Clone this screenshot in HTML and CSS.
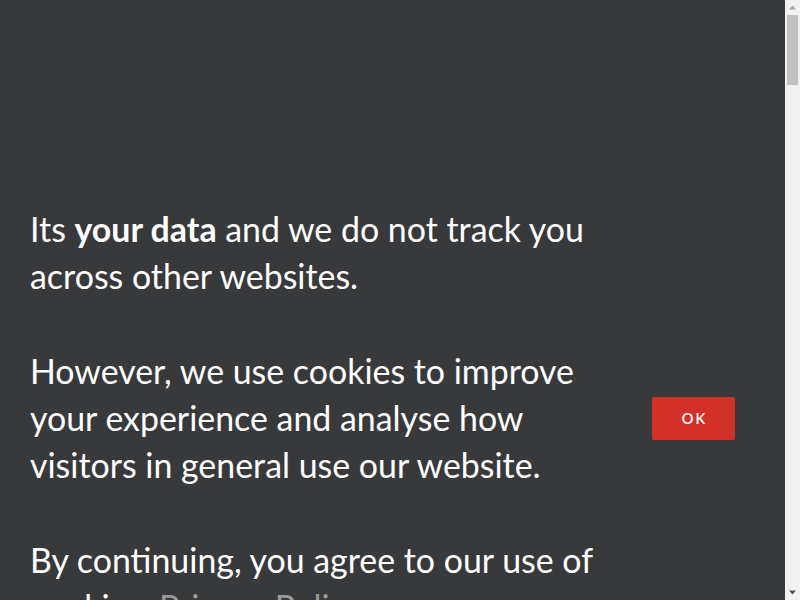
FILE: index.html
```html
<!DOCTYPE html>
<html lang="en">
<head>
<meta charset="utf-8">
<title>Cookies</title>
<link rel="stylesheet" href="styles.css">
</head>
<body>
<div class="page">
  <div class="banner">
    <div class="message">
      <p>Its <strong>your data</strong> and we do not track you across other websites.</p>
      <p>However, we use cookies to improve your experience and analyse how visitors in general use our website.</p>
      <p>By continuing, you agree to our use of cookies. <a class="link" href="#">Privacy Policy</a></p>
    </div>
    <button class="ok" type="button">OK</button>
  </div>
</div>
<div class="scrollbar" aria-hidden="true">
  <svg class="arrow up" width="15" height="15" viewBox="0 0 15 15"><path d="M4 9.5h7L7.5 5.5z" fill="#a3a3a3"/></svg>
  <div class="track"><div class="thumb"></div></div>
  <svg class="arrow down" width="15" height="15" viewBox="0 0 15 15"><path d="M4 5.5h7L7.5 9.5z" fill="#505050"/></svg>
</div>
</body>
</html>
```
FILE: styles.css
```css
html {
  background: #38393b;
}
body {
  margin: 0;
  background: #38393b;
  color: #ffffff;
  font-family: Lato, "Open Sans", sans-serif;
}
.page {
  min-height: 4890px;
  padding-top: 206px;
  box-sizing: border-box;
}
.banner {
  display: flex;
  align-items: center;
  padding-left: 30px;
}
.message {
  width: 600px;
  font-size: 33.9px;
  line-height: 47.3px;
}
.message p {
  margin: 0 0 47.3px 0;
}
.message p:last-child {
  margin-bottom: 0;
}
.message strong {
  font-weight: 700;
}
.link {
  color: #9a9a9a;
  text-decoration: none;
}
.ok {
  margin-left: 22px;
  width: 83px;
  height: 43px;
  border: 0;
  border-radius: 2px;
  background: #d3302a;
  color: #ffffff;
  font-family: Lato, sans-serif;
  font-size: 14.5px;
  font-weight: 600;
  letter-spacing: 2px;
  padding: 0 0 0 2px;
}
.scrollbar {
  position: fixed;
  top: 0;
  right: 0;
  width: 15px;
  height: 100%;
  background: #f1f1f1;
  display: flex;
  flex-direction: column;
}
.arrow {
  display: block;
  flex: none;
}
.track {
  flex: 1;
  padding: 0 2px;
}
.thumb {
  height: 70px;
  background: #c1c1c1;
}
```
